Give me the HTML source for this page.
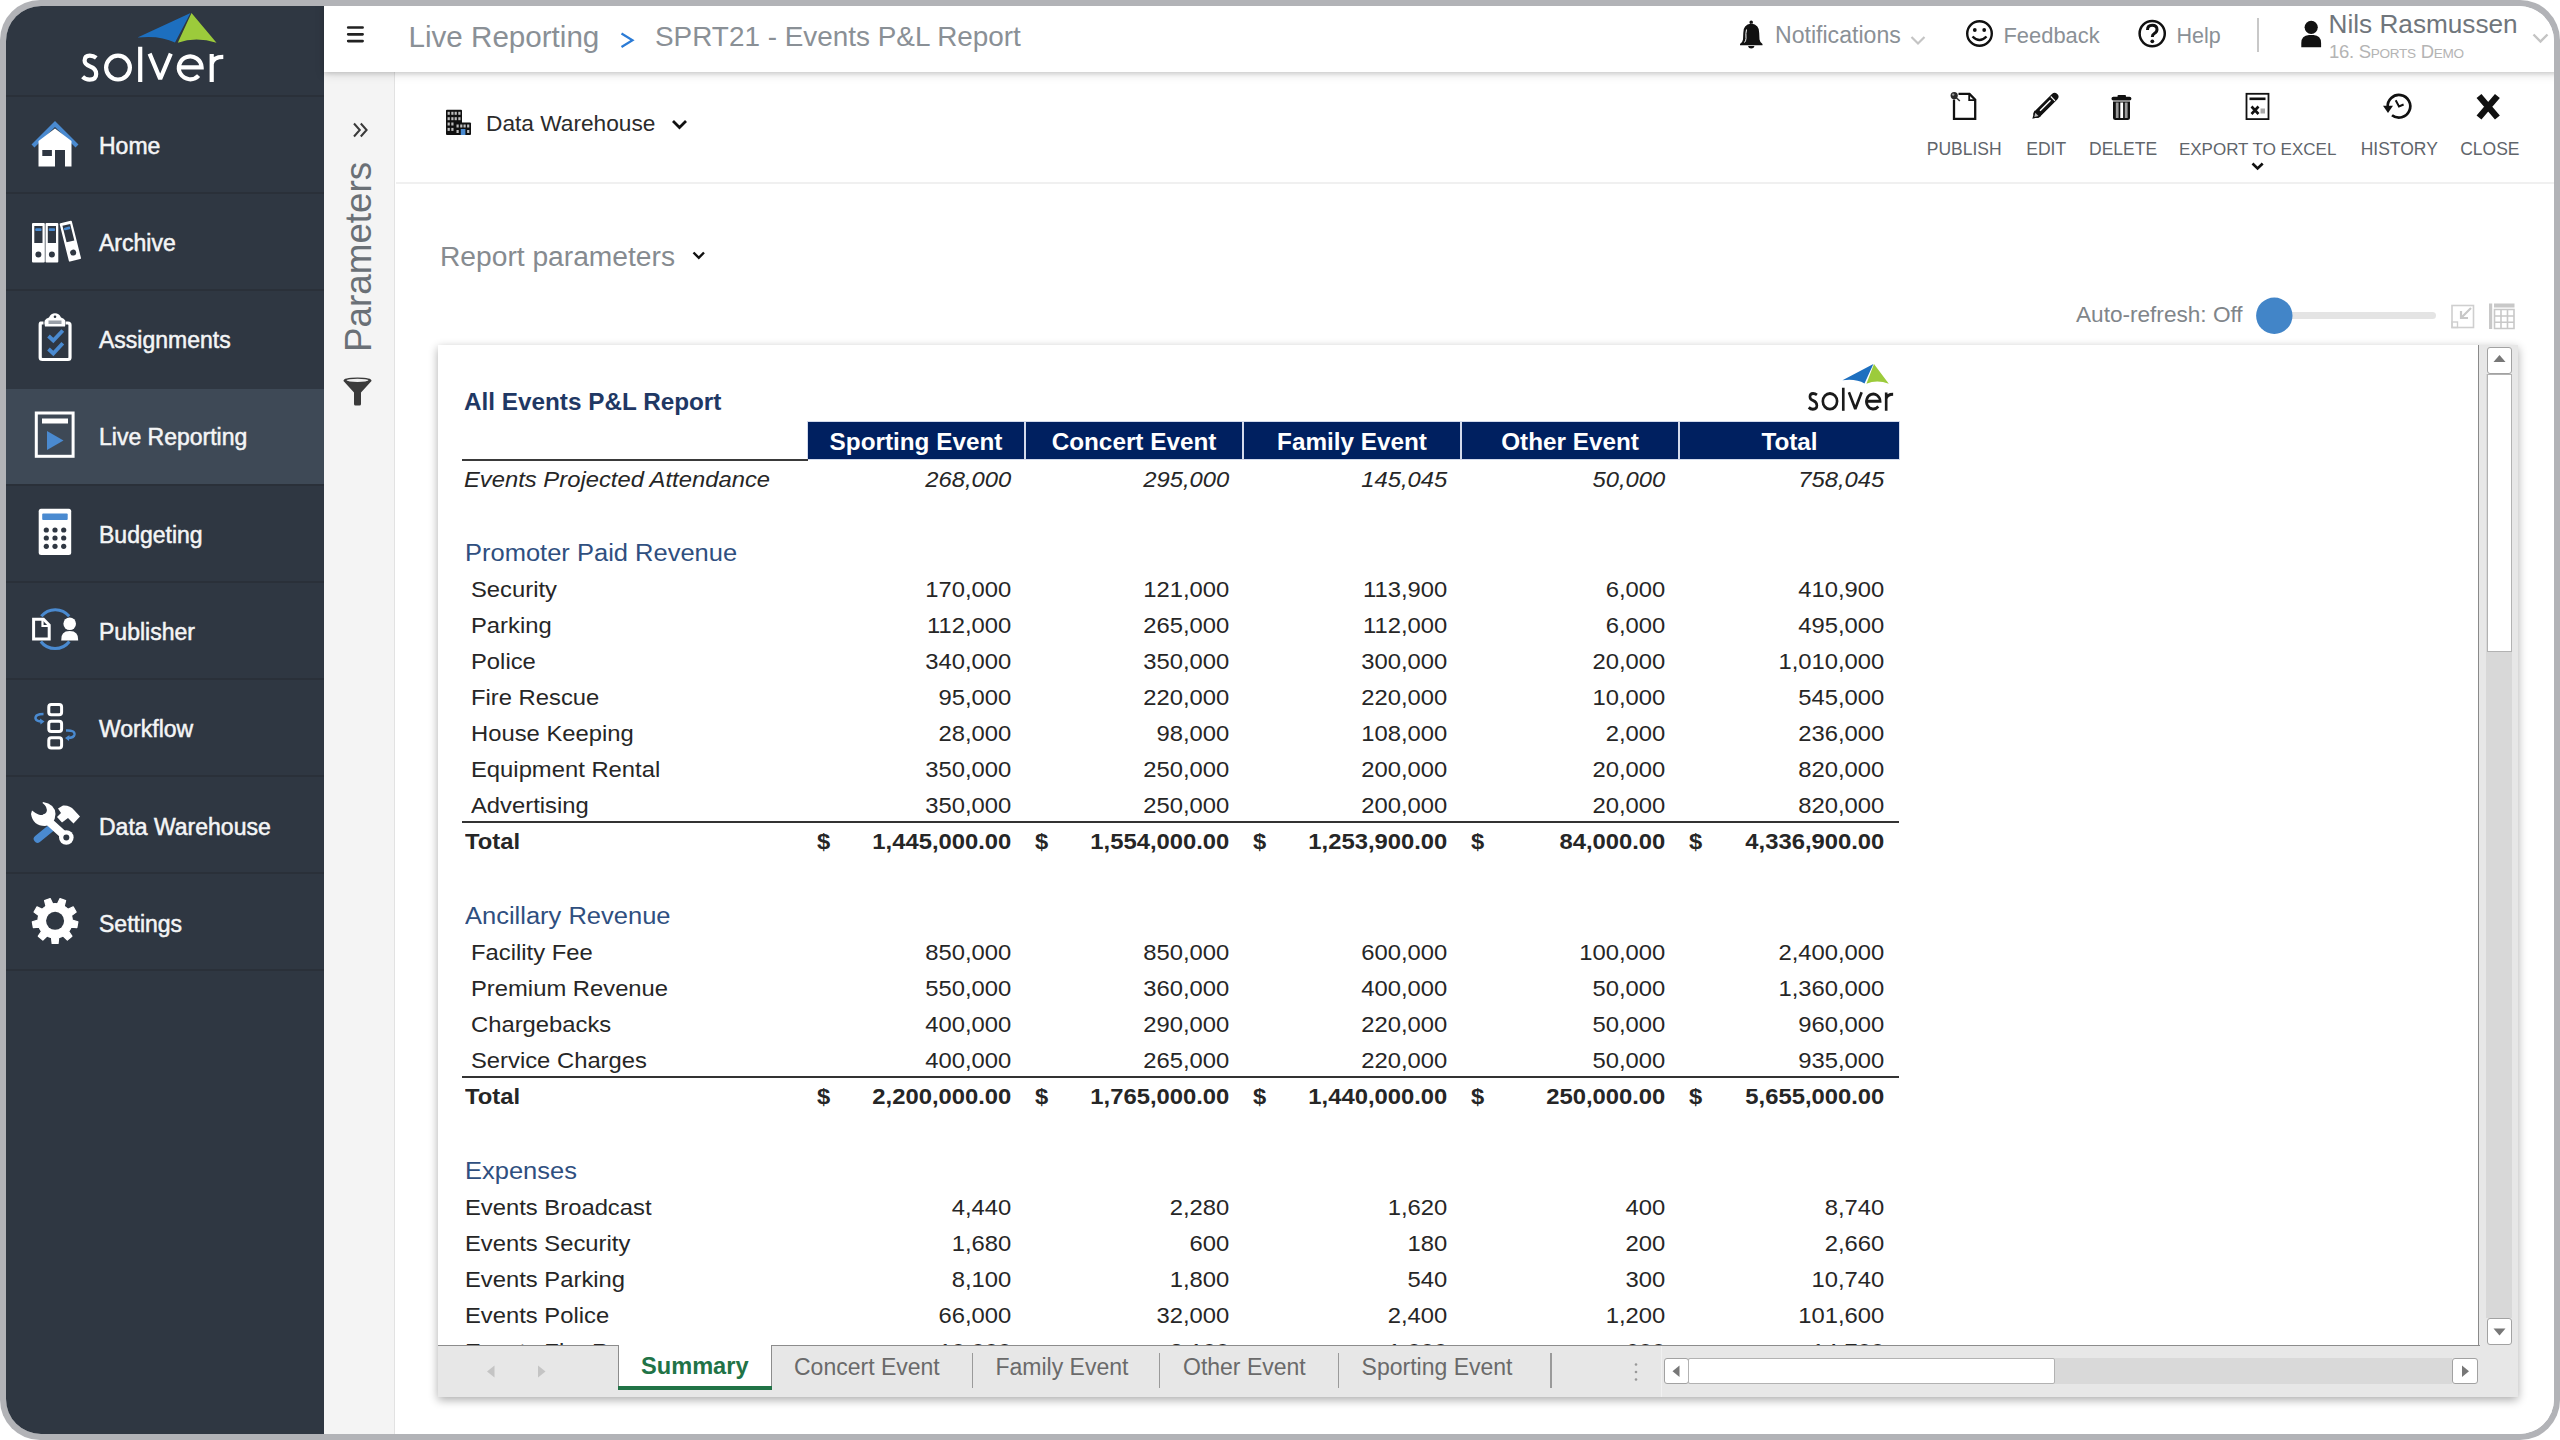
<!DOCTYPE html>
<html><head><meta charset="utf-8">
<style>
html,body{margin:0;padding:0;background:#fff;}
#root{position:absolute;left:0;top:0;width:2560px;height:1440px;overflow:hidden;font-family:"Liberation Sans",sans-serif;}
.t{position:absolute;white-space:nowrap;z-index:3;}
#frame{position:absolute;left:0;top:0;width:2560px;height:1440px;border-radius:40px;background:#b2b3b7;}
#inner{position:absolute;left:6px;top:6px;width:2548px;height:1428px;border-radius:35px;overflow:hidden;background:#fff;}
#content{position:absolute;left:-6px;top:-6px;width:2560px;height:1440px;}
#ov{position:absolute;left:0;top:0;width:2560px;height:1440px;z-index:5;}
</style></head><body><div id="root"><div id="frame"></div><div id="inner"><div id="content">
<div style="position:absolute;left:0px;top:0px;width:324px;height:1440px;background:#2f3742;"></div>
<div style="position:absolute;left:0px;top:388.5px;width:324px;height:96px;background:#3e4956;"></div>
<div style="position:absolute;left:0px;top:95px;width:324px;height:2px;background:#2a3039;"></div>
<div style="position:absolute;left:0px;top:192px;width:324px;height:2px;background:#2a3039;"></div>
<div style="position:absolute;left:0px;top:289px;width:324px;height:2px;background:#2a3039;"></div>
<div style="position:absolute;left:0px;top:484px;width:324px;height:2px;background:#2a3039;"></div>
<div style="position:absolute;left:0px;top:581px;width:324px;height:2px;background:#2a3039;"></div>
<div style="position:absolute;left:0px;top:678px;width:324px;height:2px;background:#2a3039;"></div>
<div style="position:absolute;left:0px;top:775px;width:324px;height:2px;background:#2a3039;"></div>
<div style="position:absolute;left:0px;top:872px;width:324px;height:2px;background:#2a3039;"></div>
<div style="position:absolute;left:0px;top:969px;width:324px;height:2px;background:#2a3039;"></div>
<div class="t" style="left:99.00px;top:134.53px;font-size:23px;line-height:23px;color:#f4f5f6;font-weight:normal;font-style:normal;-webkit-text-stroke:0.5px #f4f5f6;">Home</div>
<div class="t" style="left:99.00px;top:231.83px;font-size:23px;line-height:23px;color:#f4f5f6;font-weight:normal;font-style:normal;-webkit-text-stroke:0.5px #f4f5f6;">Archive</div>
<div class="t" style="left:99.00px;top:329.13px;font-size:23px;line-height:23px;color:#f4f5f6;font-weight:normal;font-style:normal;-webkit-text-stroke:0.5px #f4f5f6;">Assignments</div>
<div class="t" style="left:99.00px;top:426.43px;font-size:23px;line-height:23px;color:#f4f5f6;font-weight:normal;font-style:normal;-webkit-text-stroke:0.5px #f4f5f6;">Live Reporting</div>
<div class="t" style="left:99.00px;top:523.73px;font-size:23px;line-height:23px;color:#f4f5f6;font-weight:normal;font-style:normal;-webkit-text-stroke:0.5px #f4f5f6;">Budgeting</div>
<div class="t" style="left:99.00px;top:621.03px;font-size:23px;line-height:23px;color:#f4f5f6;font-weight:normal;font-style:normal;-webkit-text-stroke:0.5px #f4f5f6;">Publisher</div>
<div class="t" style="left:99.00px;top:718.33px;font-size:23px;line-height:23px;color:#f4f5f6;font-weight:normal;font-style:normal;-webkit-text-stroke:0.5px #f4f5f6;">Workflow</div>
<div class="t" style="left:99.00px;top:815.63px;font-size:23px;line-height:23px;color:#f4f5f6;font-weight:normal;font-style:normal;-webkit-text-stroke:0.5px #f4f5f6;">Data Warehouse</div>
<div class="t" style="left:99.00px;top:912.93px;font-size:23px;line-height:23px;color:#f4f5f6;font-weight:normal;font-style:normal;-webkit-text-stroke:0.5px #f4f5f6;">Settings</div>
<div style="position:absolute;left:324px;top:0px;width:2236px;height:72px;background:#fff;box-shadow:0 2px 4px rgba(0,0,0,0.13), 0 3px 10px rgba(0,0,0,0.10);z-index:1"></div>
<div style="position:absolute;left:324px;top:72px;width:70px;height:1368px;background:#f4f4f4;border-right:1px solid #e2e2e2;box-shadow:1px 0 3px rgba(0,0,0,0.05)"></div>
<div style="position:absolute;left:395px;top:72px;width:2165px;height:1368px;background:#fff;"></div>
<div style="position:absolute;left:396px;top:182px;width:2164px;height:2px;background:#f0f0f0;"></div>
<div class="t" style="left:408.50px;top:21.54px;font-size:29.6px;line-height:29.6px;color:#8a9096;font-weight:normal;font-style:normal;">Live Reporting</div>
<div class="t" style="left:655.00px;top:22.98px;font-size:27.9px;line-height:27.9px;color:#8a9096;font-weight:normal;font-style:normal;">SPRT21 - Events P&amp;L Report</div>
<div class="t" style="left:1775.00px;top:24.45px;font-size:23.1px;line-height:23.1px;color:#8a9096;font-weight:normal;font-style:normal;">Notifications</div>
<div class="t" style="left:2003.50px;top:25.46px;font-size:21.9px;line-height:21.9px;color:#8a9096;font-weight:normal;font-style:normal;">Feedback</div>
<div class="t" style="left:2176.50px;top:25.80px;font-size:21.5px;line-height:21.5px;color:#8a9096;font-weight:normal;font-style:normal;">Help</div>
<div style="position:absolute;left:2257px;top:18px;width:2px;height:34px;background:#c8c8c8;z-index:3;"></div>
<div class="t" style="left:2328.50px;top:11.32px;font-size:26.2px;line-height:26.2px;color:#70767c;font-weight:normal;font-style:normal;">Nils Rasmussen</div>
<div class="t" style="left:2329.00px;top:42.74px;font-size:18.5px;line-height:18.5px;color:#b4b4b4;font-weight:normal;font-style:normal;letter-spacing:-0.3px;">16. S<span style="font-size:13.6px">PORTS</span> D<span style="font-size:13.6px">EMO</span></div>
<div class="t" style="left:371px;top:163px;transform-origin:0 0;transform:rotate(90deg) translate(0,0);"></div><div class="t" style="left:344px;top:352px;height:30px;transform-origin:0 0;transform:rotate(-90deg);font-size:36.8px;line-height:30px;color:#6a7076;">Parameters</div><div class="t" style="left:486.00px;top:111.78px;font-size:22.7px;line-height:22.7px;color:#2b2b2b;font-weight:normal;font-style:normal;">Data Warehouse</div>
<div class="t" style="left:1926.80px;top:140.69px;font-size:17.5px;line-height:17.5px;color:#5f656b;font-weight:normal;font-style:normal;">PUBLISH</div>
<div class="t" style="left:2026.30px;top:140.69px;font-size:17.5px;line-height:17.5px;color:#5f656b;font-weight:normal;font-style:normal;">EDIT</div>
<div class="t" style="left:2089.00px;top:140.69px;font-size:17.5px;line-height:17.5px;color:#5f656b;font-weight:normal;font-style:normal;">DELETE</div>
<div class="t" style="left:2178.90px;top:141.11px;font-size:17.0px;line-height:17.0px;color:#5f656b;font-weight:normal;font-style:normal;">EXPORT TO EXCEL</div>
<div class="t" style="left:2360.70px;top:140.69px;font-size:17.5px;line-height:17.5px;color:#5f656b;font-weight:normal;font-style:normal;">HISTORY</div>
<div class="t" style="left:2460.20px;top:140.69px;font-size:17.5px;line-height:17.5px;color:#5f656b;font-weight:normal;font-style:normal;">CLOSE</div>
<div class="t" style="left:440.00px;top:241.63px;font-size:28.2px;line-height:28.2px;color:#868b90;font-weight:normal;font-style:normal;">Report parameters</div>
<div class="t" style="left:2076.00px;top:303.67px;font-size:22.6px;line-height:22.6px;color:#80858a;font-weight:normal;font-style:normal;">Auto-refresh: Off</div>
<div style="position:absolute;left:2274px;top:311.6px;width:162px;height:7.6px;background:#e4e4e4;border-radius:4px;"></div>
<div style="position:absolute;left:438px;top:345px;width:2080px;height:1052px;background:#e7e7e7;box-shadow:0 3px 9px rgba(0,0,0,0.33);z-index:2;"></div>
<div style="position:absolute;left:438px;top:345px;width:2041px;height:1000px;overflow:hidden;z-index:2;border-right:1px solid #8a8a8a;box-sizing:border-box;"><div style="position:absolute;left:0px;top:0px;width:2041px;height:1000px;background:#fff;"></div>
<div class="t" style="left:26.00px;top:45.43px;font-size:24.3px;line-height:24.3px;color:#1f3864;font-weight:bold;font-style:normal;">All Events P&amp;L Report</div>
<div style="position:absolute;left:369px;top:76px;width:1093px;height:39px;background:#d3daec;"></div>
<div style="position:absolute;left:370px;top:77px;width:216px;height:37px;background:#002060;"></div>
<div class="t" style="left:370px;width:216px;text-align:center;top:85.43px;font-size:24.3px;line-height:24.3px;color:#fff;font-weight:bold;">Sporting Event</div>
<div style="position:absolute;left:588px;top:77px;width:216px;height:37px;background:#002060;"></div>
<div class="t" style="left:588px;width:216px;text-align:center;top:85.43px;font-size:24.3px;line-height:24.3px;color:#fff;font-weight:bold;">Concert Event</div>
<div style="position:absolute;left:806px;top:77px;width:216px;height:37px;background:#002060;"></div>
<div class="t" style="left:806px;width:216px;text-align:center;top:85.43px;font-size:24.3px;line-height:24.3px;color:#fff;font-weight:bold;">Family Event</div>
<div style="position:absolute;left:1024px;top:77px;width:216px;height:37px;background:#002060;"></div>
<div class="t" style="left:1024px;width:216px;text-align:center;top:85.43px;font-size:24.3px;line-height:24.3px;color:#fff;font-weight:bold;">Other Event</div>
<div style="position:absolute;left:1242px;top:77px;width:219px;height:37px;background:#002060;"></div>
<div class="t" style="left:1242px;width:219px;text-align:center;top:85.43px;font-size:24.3px;line-height:24.3px;color:#fff;font-weight:bold;">Total</div>
<div style="position:absolute;left:24px;top:114px;width:346px;height:2px;background:#3a3a3a;"></div>
<div class="t" style="left:26.00px;top:121.85px;font-size:23.8px;line-height:23.8px;color:#262626;font-weight:normal;font-style:italic;transform:scaleY(0.94);transform-origin:0 84.65%;">Events Projected Attendance</div>
<div class="t" style="right:1466.70px;top:121.85px;font-size:23.8px;line-height:23.8px;color:#262626;font-weight:normal;font-style:italic;transform:scaleY(0.94);transform-origin:0 84.65%;">268,000</div>
<div class="t" style="right:1248.70px;top:121.85px;font-size:23.8px;line-height:23.8px;color:#262626;font-weight:normal;font-style:italic;transform:scaleY(0.94);transform-origin:0 84.65%;">295,000</div>
<div class="t" style="right:1030.70px;top:121.85px;font-size:23.8px;line-height:23.8px;color:#262626;font-weight:normal;font-style:italic;transform:scaleY(0.94);transform-origin:0 84.65%;">145,045</div>
<div class="t" style="right:812.70px;top:121.85px;font-size:23.8px;line-height:23.8px;color:#262626;font-weight:normal;font-style:italic;transform:scaleY(0.94);transform-origin:0 84.65%;">50,000</div>
<div class="t" style="right:593.70px;top:121.85px;font-size:23.8px;line-height:23.8px;color:#262626;font-weight:normal;font-style:italic;transform:scaleY(0.94);transform-origin:0 84.65%;">758,045</div>
<div class="t" style="left:27.00px;top:194.71px;font-size:25.5px;line-height:25.5px;color:#2f4f80;font-weight:normal;font-style:normal;transform:scaleY(0.94);transform-origin:0 84.65%;">Promoter Paid Revenue</div>
<div class="t" style="left:33.00px;top:232.15px;font-size:23.8px;line-height:23.8px;color:#262626;font-weight:normal;font-style:normal;transform:scaleY(0.94);transform-origin:0 84.65%;">Security</div>
<div class="t" style="right:1466.70px;top:232.15px;font-size:23.8px;line-height:23.8px;color:#262626;font-weight:normal;font-style:normal;transform:scaleY(0.94);transform-origin:0 84.65%;">170,000</div>
<div class="t" style="right:1248.70px;top:232.15px;font-size:23.8px;line-height:23.8px;color:#262626;font-weight:normal;font-style:normal;transform:scaleY(0.94);transform-origin:0 84.65%;">121,000</div>
<div class="t" style="right:1030.70px;top:232.15px;font-size:23.8px;line-height:23.8px;color:#262626;font-weight:normal;font-style:normal;transform:scaleY(0.94);transform-origin:0 84.65%;">113,900</div>
<div class="t" style="right:812.70px;top:232.15px;font-size:23.8px;line-height:23.8px;color:#262626;font-weight:normal;font-style:normal;transform:scaleY(0.94);transform-origin:0 84.65%;">6,000</div>
<div class="t" style="right:593.70px;top:232.15px;font-size:23.8px;line-height:23.8px;color:#262626;font-weight:normal;font-style:normal;transform:scaleY(0.94);transform-origin:0 84.65%;">410,900</div>
<div class="t" style="left:33.00px;top:268.15px;font-size:23.8px;line-height:23.8px;color:#262626;font-weight:normal;font-style:normal;transform:scaleY(0.94);transform-origin:0 84.65%;">Parking</div>
<div class="t" style="right:1466.70px;top:268.15px;font-size:23.8px;line-height:23.8px;color:#262626;font-weight:normal;font-style:normal;transform:scaleY(0.94);transform-origin:0 84.65%;">112,000</div>
<div class="t" style="right:1248.70px;top:268.15px;font-size:23.8px;line-height:23.8px;color:#262626;font-weight:normal;font-style:normal;transform:scaleY(0.94);transform-origin:0 84.65%;">265,000</div>
<div class="t" style="right:1030.70px;top:268.15px;font-size:23.8px;line-height:23.8px;color:#262626;font-weight:normal;font-style:normal;transform:scaleY(0.94);transform-origin:0 84.65%;">112,000</div>
<div class="t" style="right:812.70px;top:268.15px;font-size:23.8px;line-height:23.8px;color:#262626;font-weight:normal;font-style:normal;transform:scaleY(0.94);transform-origin:0 84.65%;">6,000</div>
<div class="t" style="right:593.70px;top:268.15px;font-size:23.8px;line-height:23.8px;color:#262626;font-weight:normal;font-style:normal;transform:scaleY(0.94);transform-origin:0 84.65%;">495,000</div>
<div class="t" style="left:33.00px;top:304.15px;font-size:23.8px;line-height:23.8px;color:#262626;font-weight:normal;font-style:normal;transform:scaleY(0.94);transform-origin:0 84.65%;">Police</div>
<div class="t" style="right:1466.70px;top:304.15px;font-size:23.8px;line-height:23.8px;color:#262626;font-weight:normal;font-style:normal;transform:scaleY(0.94);transform-origin:0 84.65%;">340,000</div>
<div class="t" style="right:1248.70px;top:304.15px;font-size:23.8px;line-height:23.8px;color:#262626;font-weight:normal;font-style:normal;transform:scaleY(0.94);transform-origin:0 84.65%;">350,000</div>
<div class="t" style="right:1030.70px;top:304.15px;font-size:23.8px;line-height:23.8px;color:#262626;font-weight:normal;font-style:normal;transform:scaleY(0.94);transform-origin:0 84.65%;">300,000</div>
<div class="t" style="right:812.70px;top:304.15px;font-size:23.8px;line-height:23.8px;color:#262626;font-weight:normal;font-style:normal;transform:scaleY(0.94);transform-origin:0 84.65%;">20,000</div>
<div class="t" style="right:593.70px;top:304.15px;font-size:23.8px;line-height:23.8px;color:#262626;font-weight:normal;font-style:normal;transform:scaleY(0.94);transform-origin:0 84.65%;">1,010,000</div>
<div class="t" style="left:33.00px;top:340.15px;font-size:23.8px;line-height:23.8px;color:#262626;font-weight:normal;font-style:normal;transform:scaleY(0.94);transform-origin:0 84.65%;">Fire Rescue</div>
<div class="t" style="right:1466.70px;top:340.15px;font-size:23.8px;line-height:23.8px;color:#262626;font-weight:normal;font-style:normal;transform:scaleY(0.94);transform-origin:0 84.65%;">95,000</div>
<div class="t" style="right:1248.70px;top:340.15px;font-size:23.8px;line-height:23.8px;color:#262626;font-weight:normal;font-style:normal;transform:scaleY(0.94);transform-origin:0 84.65%;">220,000</div>
<div class="t" style="right:1030.70px;top:340.15px;font-size:23.8px;line-height:23.8px;color:#262626;font-weight:normal;font-style:normal;transform:scaleY(0.94);transform-origin:0 84.65%;">220,000</div>
<div class="t" style="right:812.70px;top:340.15px;font-size:23.8px;line-height:23.8px;color:#262626;font-weight:normal;font-style:normal;transform:scaleY(0.94);transform-origin:0 84.65%;">10,000</div>
<div class="t" style="right:593.70px;top:340.15px;font-size:23.8px;line-height:23.8px;color:#262626;font-weight:normal;font-style:normal;transform:scaleY(0.94);transform-origin:0 84.65%;">545,000</div>
<div class="t" style="left:33.00px;top:376.15px;font-size:23.8px;line-height:23.8px;color:#262626;font-weight:normal;font-style:normal;transform:scaleY(0.94);transform-origin:0 84.65%;">House Keeping</div>
<div class="t" style="right:1466.70px;top:376.15px;font-size:23.8px;line-height:23.8px;color:#262626;font-weight:normal;font-style:normal;transform:scaleY(0.94);transform-origin:0 84.65%;">28,000</div>
<div class="t" style="right:1248.70px;top:376.15px;font-size:23.8px;line-height:23.8px;color:#262626;font-weight:normal;font-style:normal;transform:scaleY(0.94);transform-origin:0 84.65%;">98,000</div>
<div class="t" style="right:1030.70px;top:376.15px;font-size:23.8px;line-height:23.8px;color:#262626;font-weight:normal;font-style:normal;transform:scaleY(0.94);transform-origin:0 84.65%;">108,000</div>
<div class="t" style="right:812.70px;top:376.15px;font-size:23.8px;line-height:23.8px;color:#262626;font-weight:normal;font-style:normal;transform:scaleY(0.94);transform-origin:0 84.65%;">2,000</div>
<div class="t" style="right:593.70px;top:376.15px;font-size:23.8px;line-height:23.8px;color:#262626;font-weight:normal;font-style:normal;transform:scaleY(0.94);transform-origin:0 84.65%;">236,000</div>
<div class="t" style="left:33.00px;top:412.15px;font-size:23.8px;line-height:23.8px;color:#262626;font-weight:normal;font-style:normal;transform:scaleY(0.94);transform-origin:0 84.65%;">Equipment Rental</div>
<div class="t" style="right:1466.70px;top:412.15px;font-size:23.8px;line-height:23.8px;color:#262626;font-weight:normal;font-style:normal;transform:scaleY(0.94);transform-origin:0 84.65%;">350,000</div>
<div class="t" style="right:1248.70px;top:412.15px;font-size:23.8px;line-height:23.8px;color:#262626;font-weight:normal;font-style:normal;transform:scaleY(0.94);transform-origin:0 84.65%;">250,000</div>
<div class="t" style="right:1030.70px;top:412.15px;font-size:23.8px;line-height:23.8px;color:#262626;font-weight:normal;font-style:normal;transform:scaleY(0.94);transform-origin:0 84.65%;">200,000</div>
<div class="t" style="right:812.70px;top:412.15px;font-size:23.8px;line-height:23.8px;color:#262626;font-weight:normal;font-style:normal;transform:scaleY(0.94);transform-origin:0 84.65%;">20,000</div>
<div class="t" style="right:593.70px;top:412.15px;font-size:23.8px;line-height:23.8px;color:#262626;font-weight:normal;font-style:normal;transform:scaleY(0.94);transform-origin:0 84.65%;">820,000</div>
<div class="t" style="left:33.00px;top:448.15px;font-size:23.8px;line-height:23.8px;color:#262626;font-weight:normal;font-style:normal;transform:scaleY(0.94);transform-origin:0 84.65%;">Advertising</div>
<div class="t" style="right:1466.70px;top:448.15px;font-size:23.8px;line-height:23.8px;color:#262626;font-weight:normal;font-style:normal;transform:scaleY(0.94);transform-origin:0 84.65%;">350,000</div>
<div class="t" style="right:1248.70px;top:448.15px;font-size:23.8px;line-height:23.8px;color:#262626;font-weight:normal;font-style:normal;transform:scaleY(0.94);transform-origin:0 84.65%;">250,000</div>
<div class="t" style="right:1030.70px;top:448.15px;font-size:23.8px;line-height:23.8px;color:#262626;font-weight:normal;font-style:normal;transform:scaleY(0.94);transform-origin:0 84.65%;">200,000</div>
<div class="t" style="right:812.70px;top:448.15px;font-size:23.8px;line-height:23.8px;color:#262626;font-weight:normal;font-style:normal;transform:scaleY(0.94);transform-origin:0 84.65%;">20,000</div>
<div class="t" style="right:593.70px;top:448.15px;font-size:23.8px;line-height:23.8px;color:#262626;font-weight:normal;font-style:normal;transform:scaleY(0.94);transform-origin:0 84.65%;">820,000</div>
<div style="position:absolute;left:24px;top:476px;width:1437px;height:2px;background:#333;"></div>
<div class="t" style="left:27.00px;top:483.85px;font-size:23.8px;line-height:23.8px;color:#262626;font-weight:bold;font-style:normal;transform:scaleY(0.94);transform-origin:0 84.65%;">Total</div>
<div class="t" style="right:1466.70px;top:483.85px;font-size:23.8px;line-height:23.8px;color:#262626;font-weight:bold;font-style:normal;transform:scaleY(0.94);transform-origin:0 84.65%;">1,445,000.00</div>
<div class="t" style="left:379.00px;top:483.85px;font-size:23.8px;line-height:23.8px;color:#262626;font-weight:bold;font-style:normal;transform:scaleY(0.94);transform-origin:0 84.65%;">$</div>
<div class="t" style="right:1248.70px;top:483.85px;font-size:23.8px;line-height:23.8px;color:#262626;font-weight:bold;font-style:normal;transform:scaleY(0.94);transform-origin:0 84.65%;">1,554,000.00</div>
<div class="t" style="left:597.00px;top:483.85px;font-size:23.8px;line-height:23.8px;color:#262626;font-weight:bold;font-style:normal;transform:scaleY(0.94);transform-origin:0 84.65%;">$</div>
<div class="t" style="right:1030.70px;top:483.85px;font-size:23.8px;line-height:23.8px;color:#262626;font-weight:bold;font-style:normal;transform:scaleY(0.94);transform-origin:0 84.65%;">1,253,900.00</div>
<div class="t" style="left:815.00px;top:483.85px;font-size:23.8px;line-height:23.8px;color:#262626;font-weight:bold;font-style:normal;transform:scaleY(0.94);transform-origin:0 84.65%;">$</div>
<div class="t" style="right:812.70px;top:483.85px;font-size:23.8px;line-height:23.8px;color:#262626;font-weight:bold;font-style:normal;transform:scaleY(0.94);transform-origin:0 84.65%;">84,000.00</div>
<div class="t" style="left:1033.00px;top:483.85px;font-size:23.8px;line-height:23.8px;color:#262626;font-weight:bold;font-style:normal;transform:scaleY(0.94);transform-origin:0 84.65%;">$</div>
<div class="t" style="right:593.70px;top:483.85px;font-size:23.8px;line-height:23.8px;color:#262626;font-weight:bold;font-style:normal;transform:scaleY(0.94);transform-origin:0 84.65%;">4,336,900.00</div>
<div class="t" style="left:1251.00px;top:483.85px;font-size:23.8px;line-height:23.8px;color:#262626;font-weight:bold;font-style:normal;transform:scaleY(0.94);transform-origin:0 84.65%;">$</div>
<div class="t" style="left:27.00px;top:557.81px;font-size:25.5px;line-height:25.5px;color:#2f4f80;font-weight:normal;font-style:normal;transform:scaleY(0.94);transform-origin:0 84.65%;">Ancillary Revenue</div>
<div class="t" style="left:33.00px;top:595.15px;font-size:23.8px;line-height:23.8px;color:#262626;font-weight:normal;font-style:normal;transform:scaleY(0.94);transform-origin:0 84.65%;">Facility Fee</div>
<div class="t" style="right:1466.70px;top:595.15px;font-size:23.8px;line-height:23.8px;color:#262626;font-weight:normal;font-style:normal;transform:scaleY(0.94);transform-origin:0 84.65%;">850,000</div>
<div class="t" style="right:1248.70px;top:595.15px;font-size:23.8px;line-height:23.8px;color:#262626;font-weight:normal;font-style:normal;transform:scaleY(0.94);transform-origin:0 84.65%;">850,000</div>
<div class="t" style="right:1030.70px;top:595.15px;font-size:23.8px;line-height:23.8px;color:#262626;font-weight:normal;font-style:normal;transform:scaleY(0.94);transform-origin:0 84.65%;">600,000</div>
<div class="t" style="right:812.70px;top:595.15px;font-size:23.8px;line-height:23.8px;color:#262626;font-weight:normal;font-style:normal;transform:scaleY(0.94);transform-origin:0 84.65%;">100,000</div>
<div class="t" style="right:593.70px;top:595.15px;font-size:23.8px;line-height:23.8px;color:#262626;font-weight:normal;font-style:normal;transform:scaleY(0.94);transform-origin:0 84.65%;">2,400,000</div>
<div class="t" style="left:33.00px;top:631.15px;font-size:23.8px;line-height:23.8px;color:#262626;font-weight:normal;font-style:normal;transform:scaleY(0.94);transform-origin:0 84.65%;">Premium Revenue</div>
<div class="t" style="right:1466.70px;top:631.15px;font-size:23.8px;line-height:23.8px;color:#262626;font-weight:normal;font-style:normal;transform:scaleY(0.94);transform-origin:0 84.65%;">550,000</div>
<div class="t" style="right:1248.70px;top:631.15px;font-size:23.8px;line-height:23.8px;color:#262626;font-weight:normal;font-style:normal;transform:scaleY(0.94);transform-origin:0 84.65%;">360,000</div>
<div class="t" style="right:1030.70px;top:631.15px;font-size:23.8px;line-height:23.8px;color:#262626;font-weight:normal;font-style:normal;transform:scaleY(0.94);transform-origin:0 84.65%;">400,000</div>
<div class="t" style="right:812.70px;top:631.15px;font-size:23.8px;line-height:23.8px;color:#262626;font-weight:normal;font-style:normal;transform:scaleY(0.94);transform-origin:0 84.65%;">50,000</div>
<div class="t" style="right:593.70px;top:631.15px;font-size:23.8px;line-height:23.8px;color:#262626;font-weight:normal;font-style:normal;transform:scaleY(0.94);transform-origin:0 84.65%;">1,360,000</div>
<div class="t" style="left:33.00px;top:667.15px;font-size:23.8px;line-height:23.8px;color:#262626;font-weight:normal;font-style:normal;transform:scaleY(0.94);transform-origin:0 84.65%;">Chargebacks</div>
<div class="t" style="right:1466.70px;top:667.15px;font-size:23.8px;line-height:23.8px;color:#262626;font-weight:normal;font-style:normal;transform:scaleY(0.94);transform-origin:0 84.65%;">400,000</div>
<div class="t" style="right:1248.70px;top:667.15px;font-size:23.8px;line-height:23.8px;color:#262626;font-weight:normal;font-style:normal;transform:scaleY(0.94);transform-origin:0 84.65%;">290,000</div>
<div class="t" style="right:1030.70px;top:667.15px;font-size:23.8px;line-height:23.8px;color:#262626;font-weight:normal;font-style:normal;transform:scaleY(0.94);transform-origin:0 84.65%;">220,000</div>
<div class="t" style="right:812.70px;top:667.15px;font-size:23.8px;line-height:23.8px;color:#262626;font-weight:normal;font-style:normal;transform:scaleY(0.94);transform-origin:0 84.65%;">50,000</div>
<div class="t" style="right:593.70px;top:667.15px;font-size:23.8px;line-height:23.8px;color:#262626;font-weight:normal;font-style:normal;transform:scaleY(0.94);transform-origin:0 84.65%;">960,000</div>
<div class="t" style="left:33.00px;top:703.15px;font-size:23.8px;line-height:23.8px;color:#262626;font-weight:normal;font-style:normal;transform:scaleY(0.94);transform-origin:0 84.65%;">Service Charges</div>
<div class="t" style="right:1466.70px;top:703.15px;font-size:23.8px;line-height:23.8px;color:#262626;font-weight:normal;font-style:normal;transform:scaleY(0.94);transform-origin:0 84.65%;">400,000</div>
<div class="t" style="right:1248.70px;top:703.15px;font-size:23.8px;line-height:23.8px;color:#262626;font-weight:normal;font-style:normal;transform:scaleY(0.94);transform-origin:0 84.65%;">265,000</div>
<div class="t" style="right:1030.70px;top:703.15px;font-size:23.8px;line-height:23.8px;color:#262626;font-weight:normal;font-style:normal;transform:scaleY(0.94);transform-origin:0 84.65%;">220,000</div>
<div class="t" style="right:812.70px;top:703.15px;font-size:23.8px;line-height:23.8px;color:#262626;font-weight:normal;font-style:normal;transform:scaleY(0.94);transform-origin:0 84.65%;">50,000</div>
<div class="t" style="right:593.70px;top:703.15px;font-size:23.8px;line-height:23.8px;color:#262626;font-weight:normal;font-style:normal;transform:scaleY(0.94);transform-origin:0 84.65%;">935,000</div>
<div style="position:absolute;left:24px;top:731px;width:1437px;height:2px;background:#333;"></div>
<div class="t" style="left:27.00px;top:738.85px;font-size:23.8px;line-height:23.8px;color:#262626;font-weight:bold;font-style:normal;transform:scaleY(0.94);transform-origin:0 84.65%;">Total</div>
<div class="t" style="right:1466.70px;top:738.85px;font-size:23.8px;line-height:23.8px;color:#262626;font-weight:bold;font-style:normal;transform:scaleY(0.94);transform-origin:0 84.65%;">2,200,000.00</div>
<div class="t" style="left:379.00px;top:738.85px;font-size:23.8px;line-height:23.8px;color:#262626;font-weight:bold;font-style:normal;transform:scaleY(0.94);transform-origin:0 84.65%;">$</div>
<div class="t" style="right:1248.70px;top:738.85px;font-size:23.8px;line-height:23.8px;color:#262626;font-weight:bold;font-style:normal;transform:scaleY(0.94);transform-origin:0 84.65%;">1,765,000.00</div>
<div class="t" style="left:597.00px;top:738.85px;font-size:23.8px;line-height:23.8px;color:#262626;font-weight:bold;font-style:normal;transform:scaleY(0.94);transform-origin:0 84.65%;">$</div>
<div class="t" style="right:1030.70px;top:738.85px;font-size:23.8px;line-height:23.8px;color:#262626;font-weight:bold;font-style:normal;transform:scaleY(0.94);transform-origin:0 84.65%;">1,440,000.00</div>
<div class="t" style="left:815.00px;top:738.85px;font-size:23.8px;line-height:23.8px;color:#262626;font-weight:bold;font-style:normal;transform:scaleY(0.94);transform-origin:0 84.65%;">$</div>
<div class="t" style="right:812.70px;top:738.85px;font-size:23.8px;line-height:23.8px;color:#262626;font-weight:bold;font-style:normal;transform:scaleY(0.94);transform-origin:0 84.65%;">250,000.00</div>
<div class="t" style="left:1033.00px;top:738.85px;font-size:23.8px;line-height:23.8px;color:#262626;font-weight:bold;font-style:normal;transform:scaleY(0.94);transform-origin:0 84.65%;">$</div>
<div class="t" style="right:593.70px;top:738.85px;font-size:23.8px;line-height:23.8px;color:#262626;font-weight:bold;font-style:normal;transform:scaleY(0.94);transform-origin:0 84.65%;">5,655,000.00</div>
<div class="t" style="left:1251.00px;top:738.85px;font-size:23.8px;line-height:23.8px;color:#262626;font-weight:bold;font-style:normal;transform:scaleY(0.94);transform-origin:0 84.65%;">$</div>
<div class="t" style="left:27.00px;top:812.71px;font-size:25.5px;line-height:25.5px;color:#2f4f80;font-weight:normal;font-style:normal;transform:scaleY(0.94);transform-origin:0 84.65%;">Expenses</div>
<div class="t" style="left:27.00px;top:850.35px;font-size:23.8px;line-height:23.8px;color:#262626;font-weight:normal;font-style:normal;transform:scaleY(0.94);transform-origin:0 84.65%;">Events Broadcast</div>
<div class="t" style="right:1466.70px;top:850.35px;font-size:23.8px;line-height:23.8px;color:#262626;font-weight:normal;font-style:normal;transform:scaleY(0.94);transform-origin:0 84.65%;">4,440</div>
<div class="t" style="right:1248.70px;top:850.35px;font-size:23.8px;line-height:23.8px;color:#262626;font-weight:normal;font-style:normal;transform:scaleY(0.94);transform-origin:0 84.65%;">2,280</div>
<div class="t" style="right:1030.70px;top:850.35px;font-size:23.8px;line-height:23.8px;color:#262626;font-weight:normal;font-style:normal;transform:scaleY(0.94);transform-origin:0 84.65%;">1,620</div>
<div class="t" style="right:812.70px;top:850.35px;font-size:23.8px;line-height:23.8px;color:#262626;font-weight:normal;font-style:normal;transform:scaleY(0.94);transform-origin:0 84.65%;">400</div>
<div class="t" style="right:593.70px;top:850.35px;font-size:23.8px;line-height:23.8px;color:#262626;font-weight:normal;font-style:normal;transform:scaleY(0.94);transform-origin:0 84.65%;">8,740</div>
<div class="t" style="left:27.00px;top:886.35px;font-size:23.8px;line-height:23.8px;color:#262626;font-weight:normal;font-style:normal;transform:scaleY(0.94);transform-origin:0 84.65%;">Events Security</div>
<div class="t" style="right:1466.70px;top:886.35px;font-size:23.8px;line-height:23.8px;color:#262626;font-weight:normal;font-style:normal;transform:scaleY(0.94);transform-origin:0 84.65%;">1,680</div>
<div class="t" style="right:1248.70px;top:886.35px;font-size:23.8px;line-height:23.8px;color:#262626;font-weight:normal;font-style:normal;transform:scaleY(0.94);transform-origin:0 84.65%;">600</div>
<div class="t" style="right:1030.70px;top:886.35px;font-size:23.8px;line-height:23.8px;color:#262626;font-weight:normal;font-style:normal;transform:scaleY(0.94);transform-origin:0 84.65%;">180</div>
<div class="t" style="right:812.70px;top:886.35px;font-size:23.8px;line-height:23.8px;color:#262626;font-weight:normal;font-style:normal;transform:scaleY(0.94);transform-origin:0 84.65%;">200</div>
<div class="t" style="right:593.70px;top:886.35px;font-size:23.8px;line-height:23.8px;color:#262626;font-weight:normal;font-style:normal;transform:scaleY(0.94);transform-origin:0 84.65%;">2,660</div>
<div class="t" style="left:27.00px;top:922.35px;font-size:23.8px;line-height:23.8px;color:#262626;font-weight:normal;font-style:normal;transform:scaleY(0.94);transform-origin:0 84.65%;">Events Parking</div>
<div class="t" style="right:1466.70px;top:922.35px;font-size:23.8px;line-height:23.8px;color:#262626;font-weight:normal;font-style:normal;transform:scaleY(0.94);transform-origin:0 84.65%;">8,100</div>
<div class="t" style="right:1248.70px;top:922.35px;font-size:23.8px;line-height:23.8px;color:#262626;font-weight:normal;font-style:normal;transform:scaleY(0.94);transform-origin:0 84.65%;">1,800</div>
<div class="t" style="right:1030.70px;top:922.35px;font-size:23.8px;line-height:23.8px;color:#262626;font-weight:normal;font-style:normal;transform:scaleY(0.94);transform-origin:0 84.65%;">540</div>
<div class="t" style="right:812.70px;top:922.35px;font-size:23.8px;line-height:23.8px;color:#262626;font-weight:normal;font-style:normal;transform:scaleY(0.94);transform-origin:0 84.65%;">300</div>
<div class="t" style="right:593.70px;top:922.35px;font-size:23.8px;line-height:23.8px;color:#262626;font-weight:normal;font-style:normal;transform:scaleY(0.94);transform-origin:0 84.65%;">10,740</div>
<div class="t" style="left:27.00px;top:958.35px;font-size:23.8px;line-height:23.8px;color:#262626;font-weight:normal;font-style:normal;transform:scaleY(0.94);transform-origin:0 84.65%;">Events Police</div>
<div class="t" style="right:1466.70px;top:958.35px;font-size:23.8px;line-height:23.8px;color:#262626;font-weight:normal;font-style:normal;transform:scaleY(0.94);transform-origin:0 84.65%;">66,000</div>
<div class="t" style="right:1248.70px;top:958.35px;font-size:23.8px;line-height:23.8px;color:#262626;font-weight:normal;font-style:normal;transform:scaleY(0.94);transform-origin:0 84.65%;">32,000</div>
<div class="t" style="right:1030.70px;top:958.35px;font-size:23.8px;line-height:23.8px;color:#262626;font-weight:normal;font-style:normal;transform:scaleY(0.94);transform-origin:0 84.65%;">2,400</div>
<div class="t" style="right:812.70px;top:958.35px;font-size:23.8px;line-height:23.8px;color:#262626;font-weight:normal;font-style:normal;transform:scaleY(0.94);transform-origin:0 84.65%;">1,200</div>
<div class="t" style="right:593.70px;top:958.35px;font-size:23.8px;line-height:23.8px;color:#262626;font-weight:normal;font-style:normal;transform:scaleY(0.94);transform-origin:0 84.65%;">101,600</div>
<div class="t" style="left:27.00px;top:994.35px;font-size:23.8px;line-height:23.8px;color:#262626;font-weight:normal;font-style:normal;transform:scaleY(0.94);transform-origin:0 84.65%;">Events Fire Rescue</div>
<div class="t" style="right:1466.70px;top:994.35px;font-size:23.8px;line-height:23.8px;color:#262626;font-weight:normal;font-style:normal;transform:scaleY(0.94);transform-origin:0 84.65%;">10,000</div>
<div class="t" style="right:1248.70px;top:994.35px;font-size:23.8px;line-height:23.8px;color:#262626;font-weight:normal;font-style:normal;transform:scaleY(0.94);transform-origin:0 84.65%;">3,100</div>
<div class="t" style="right:1030.70px;top:994.35px;font-size:23.8px;line-height:23.8px;color:#262626;font-weight:normal;font-style:normal;transform:scaleY(0.94);transform-origin:0 84.65%;">1,000</div>
<div class="t" style="right:812.70px;top:994.35px;font-size:23.8px;line-height:23.8px;color:#262626;font-weight:normal;font-style:normal;transform:scaleY(0.94);transform-origin:0 84.65%;">600</div>
<div class="t" style="right:593.70px;top:994.35px;font-size:23.8px;line-height:23.8px;color:#262626;font-weight:normal;font-style:normal;transform:scaleY(0.94);transform-origin:0 84.65%;">14,700</div>
<svg style="position:absolute;left:0;top:0;z-index:4" width="2041" height="1000" viewBox="438 345 2041 1000"><path d="M1842.5,380.3 L1873.4,364.1 L1864.5,383.6 Q1856,378.5 1842.5,380.3 Z" fill="#1d6fbf"/><path d="M1874,364.1 L1888.8,383.8 Q1877,379 1866.4,383.8 Z" fill="#9ccb3b"/><g transform="translate(1759.1599999999999,357.08050000000003) scale(0.6,0.655)" fill="none" stroke="#1a1a1a" stroke-width="4.4"><path d="M96.3,57.8 Q93.5,55.6 89.8,55.6 Q84.6,55.6 84.6,60.6 Q84.6,64.6 90.2,66.4 Q96.2,68.4 96.2,74 Q96.2,79.6 89.6,79.6 Q85.4,79.6 82.6,76.8"/><circle cx="118" cy="67.6" r="11.9"/><path d="M140.2,46.8 L140.2,82"/><path d="M149.6,53.6 L160.2,79 L170.8,53.6" stroke-linejoin="miter" stroke-miterlimit="2"/><path d="M178.9,67.4 L201.6,67.4 A11.4,11.4 0 1 0 198.6,75.6"/><path d="M211.7,54 L211.7,82 M211.7,64 Q213,56.8 223.3,56.8"/></g></svg></div><div style="position:absolute;left:2486px;top:374px;width:26px;height:944px;background:#d8d8d8;z-index:3;"></div>
<div style="position:absolute;left:2486.5px;top:346.5px;width:25.5px;height:27px;background:#fff;border:1.5px solid #a2a2a2;border-radius:3px;box-sizing:border-box;z-index:3;"></div>
<div style="position:absolute;left:2486.5px;top:374px;width:25.5px;height:277.5px;background:#fff;border:1.5px solid #b2b2b2;box-sizing:border-box;z-index:3;"></div>
<div style="position:absolute;left:2486.5px;top:1318px;width:25.5px;height:26.5px;background:#fff;border:1.5px solid #a2a2a2;border-radius:3px;box-sizing:border-box;z-index:3;"></div>
<div style="position:absolute;left:438px;top:1344.5px;width:2041.5px;height:1.6px;background:#8c8c8c;z-index:3;"></div>
<div style="position:absolute;left:617.5px;top:1344.5px;width:154px;height:45px;background:#fff;border-left:1.5px solid #8c8c8c;border-right:1.5px solid #8c8c8c;box-sizing:border-box;z-index:3;"></div>
<div style="position:absolute;left:617.5px;top:1386px;width:154px;height:3.8px;background:#217346;z-index:3;"></div>
<div class="t" style="left:641.00px;top:1355.32px;font-size:23.6px;line-height:23.6px;color:#217346;font-weight:bold;font-style:normal;">Summary</div>
<div class="t" style="left:794.00px;top:1355.83px;font-size:23.0px;line-height:23.0px;color:#6a6a6a;font-weight:normal;font-style:normal;">Concert Event</div>
<div class="t" style="left:995.50px;top:1355.83px;font-size:23.0px;line-height:23.0px;color:#6a6a6a;font-weight:normal;font-style:normal;">Family Event</div>
<div class="t" style="left:1183.00px;top:1355.83px;font-size:23.0px;line-height:23.0px;color:#6a6a6a;font-weight:normal;font-style:normal;">Other Event</div>
<div class="t" style="left:1361.60px;top:1355.83px;font-size:23.0px;line-height:23.0px;color:#6a6a6a;font-weight:normal;font-style:normal;">Sporting Event</div>
<div style="position:absolute;left:971.75px;top:1352.5px;width:1.5px;height:35.5px;background:#9a9a9a;z-index:3;"></div>
<div style="position:absolute;left:1158.75px;top:1352.5px;width:1.5px;height:35.5px;background:#9a9a9a;z-index:3;"></div>
<div style="position:absolute;left:1337.75px;top:1352.5px;width:1.5px;height:35.5px;background:#9a9a9a;z-index:3;"></div>
<div style="position:absolute;left:1550.25px;top:1352.5px;width:1.5px;height:35.5px;background:#9a9a9a;z-index:3;"></div>
<div style="position:absolute;left:1661px;top:1346px;width:1.2px;height:51px;background:#f0f0f0;z-index:3;"></div>
<div style="position:absolute;left:1688px;top:1357.5px;width:764px;height:26.5px;background:#d9d9d9;z-index:3;"></div>
<div style="position:absolute;left:1663.5px;top:1358px;width:25px;height:26px;background:#fff;border:1.5px solid #a2a2a2;border-radius:3px;box-sizing:border-box;z-index:3;"></div>
<div style="position:absolute;left:1688px;top:1358px;width:366.5px;height:26px;background:#fff;border:1.5px solid #b2b2b2;border-radius:2px;box-sizing:border-box;z-index:3;"></div>
<div style="position:absolute;left:2452px;top:1358px;width:26px;height:26px;background:#fff;border:1.5px solid #a2a2a2;border-radius:3px;box-sizing:border-box;z-index:3;"></div>

<svg id="ov" width="2560" height="1440" viewBox="0 0 2560 1440"><path d="M137.5,37.5 L190.5,13 L175,42.5 Q160,35 137.5,37.5 Z" fill="#1d6fbf"/><path d="M191.5,13 L216.5,42.8 Q196,36 177.8,42.8 Z" fill="#9ccb3b"/><g transform="translate(0,0) scale(1,1)" fill="none" stroke="#ffffff" stroke-width="4.2"><path d="M96.3,57.8 Q93.5,55.6 89.8,55.6 Q84.6,55.6 84.6,60.6 Q84.6,64.6 90.2,66.4 Q96.2,68.4 96.2,74 Q96.2,79.6 89.6,79.6 Q85.4,79.6 82.6,76.8"/><circle cx="118" cy="67.6" r="11.9"/><path d="M140.2,46.8 L140.2,82"/><path d="M149.6,53.6 L160.2,79 L170.8,53.6" stroke-linejoin="miter" stroke-miterlimit="2"/><path d="M178.9,67.4 L201.6,67.4 A11.4,11.4 0 1 0 198.6,75.6"/><path d="M211.7,54 L211.7,82 M211.7,64 Q213,56.8 223.3,56.8"/></g><path d="M33,146 L55,124 L77,146" fill="none" stroke="#4a8ad0" stroke-width="4.2" stroke-linejoin="miter"/><path d="M38.5,166.5 L38.5,141 L55,128.5 L71.5,141 L71.5,166.5 L65,166.5 L65,150 L55,150 L55,166.5 Z" fill="#ffffff"/><rect x="42.3" y="150" width="9.6" height="6" fill="#2f3742"/><rect x="32" y="223" width="12.8" height="39.5" rx="1" fill="#ffffff"/><rect x="34.3" y="226" width="8.2" height="17" fill="#2f3742"/><rect x="35.2" y="228.3" width="6.4" height="2.6" rx="1" fill="#4a8ad0"/><circle cx="38.4" cy="254.5" r="3" fill="#2f3742"/><rect x="45.5" y="223" width="12.8" height="39.5" rx="1" fill="#ffffff"/><rect x="47.8" y="226" width="8.2" height="17" fill="#2f3742"/><rect x="48.7" y="228.3" width="6.4" height="2.6" rx="1" fill="#4a8ad0"/><circle cx="51.9" cy="254.5" r="3" fill="#2f3742"/><g transform="translate(59.5,223.5) rotate(-14)"><rect x="0" y="0" width="12.5" height="39.5" rx="1" fill="#ffffff"/><rect x="2.3" y="3" width="8" height="17" fill="#2f3742"/><rect x="3" y="5.3" width="6.4" height="2.6" rx="1" fill="#4a8ad0"/><circle cx="6.2" cy="31.5" r="3" fill="#2f3742"/></g><path d="M43.5,323 L40.5,323 Q40.2,323 40.2,325 L40.2,357.5 Q40.2,359.5 42.5,359.5 L68,359.5 Q70,359.5 70,357.5 L70,325 Q70,323 68,323 L66,323" fill="none" stroke="#ffffff" stroke-width="3.2"/><path d="M45,326.5 Q42.5,319 49,317.5 Q51,313.3 55,313.3 Q59,313.3 61,317.5 Q67.5,319 65,326.5 Z" fill="#ffffff"/><rect x="48.5" y="320.5" width="13" height="3.5" fill="#9aa0a8"/><circle cx="55" cy="316.8" r="1.3" fill="#2f3742"/><path d="M48.5,336 L53.3,340.5 L62.8,330.5 M48.5,349 L53.3,353.5 L62.8,343.3" fill="none" stroke="#4a8ad0" stroke-width="3.8"/><rect x="36.3" y="413" width="36.8" height="43.3" fill="none" stroke="#ffffff" stroke-width="3"/><rect x="42" y="418.5" width="26" height="5" fill="#ffffff"/><path d="M47,431 L47,450 L63.5,440.5 Z" fill="#4a8ad0"/><rect x="38.7" y="508.7" width="32.5" height="46.3" rx="2.5" fill="#ffffff"/><rect x="42.2" y="513.5" width="25.5" height="6.5" rx="1" fill="#4a8ad0"/><circle cx="46.3" cy="530" r="2.6" fill="#2f3742"/><circle cx="55" cy="530" r="2.6" fill="#2f3742"/><circle cx="63.7" cy="530" r="2.6" fill="#2f3742"/><circle cx="46.3" cy="538" r="2.6" fill="#2f3742"/><circle cx="55" cy="538" r="2.6" fill="#2f3742"/><circle cx="63.7" cy="538" r="2.6" fill="#2f3742"/><circle cx="46.3" cy="546.3" r="2.6" fill="#2f3742"/><circle cx="55" cy="546.3" r="2.6" fill="#2f3742"/><circle cx="63.7" cy="546.3" r="2.6" fill="#2f3742"/><path d="M41.3,616.3 A18,18 0 0 1 69.2,616.3" fill="none" stroke="#4a8ad0" stroke-width="3"/><path d="M69.4,641.5 A18,18 0 0 1 40.8,641.5" fill="none" stroke="#4a8ad0" stroke-width="3"/><path d="M33.6,619.2 L43.5,619.2 L49.2,625 L49.2,639 L33.6,639 Z" fill="#2f3742" stroke="#ffffff" stroke-width="3"/><path d="M42.5,619.5 L42.5,626 L49,626" fill="none" stroke="#ffffff" stroke-width="2.2"/><circle cx="69.7" cy="623.8" r="6.3" fill="#ffffff"/><path d="M61.2,640.5 Q60.5,631 69.7,631 Q78.8,631 78.2,640.5 Z" fill="#ffffff"/><rect x="48.8" y="704.6" width="12.8" height="10.2" rx="2.5" fill="none" stroke="#ffffff" stroke-width="3"/><rect x="48.8" y="721.2" width="12.8" height="10.2" rx="2.5" fill="none" stroke="#ffffff" stroke-width="3"/><rect x="48.8" y="737.7" width="12.8" height="10.2" rx="2.5" fill="none" stroke="#ffffff" stroke-width="3"/><path d="M43.5,714 Q35,714 35.5,718.5 Q36.5,721.5 42,721.5" fill="none" stroke="#4a8ad0" stroke-width="2.4"/><path d="M40,718.5 L44.5,721.5 L40.5,724.5 Z" fill="#4a8ad0"/><path d="M66,730.5 Q75,730 74.5,734.5 Q74,738 67.5,738" fill="none" stroke="#4a8ad0" stroke-width="2.4"/><path d="M69.5,735 L65,738 L69,741 Z" fill="#4a8ad0"/><path d="M37.5,839 L51,828" stroke="#4a8ad0" stroke-width="7.5" stroke-linecap="round"/><path d="M58,808.5 L63,805.5 Q70,805 74,810 L80,816.5 L73.5,823.5 L68,818 L62,822.5 L57,817 L61,813 Z" fill="#ffffff"/><path d="M45,818 L66.5,837.5" stroke="#ffffff" stroke-width="8" stroke-linecap="round"/><circle cx="66.3" cy="837.5" r="7.3" fill="#ffffff"/><circle cx="66.3" cy="837.5" r="3" fill="#2f3742"/><path d="M31,814 Q33,826 45,826 Q55,825 55.5,814 Q55,804 43,802 L42.5,803 Q48,807 46.5,812 Q44,816.5 38.5,814.5 Q35,813 32,810.5 Z" fill="#ffffff"/><path d="M60.98,936.96 L58.68,937.62 L58.08,943.40 L52.12,943.40 L51.52,937.62 L49.22,936.96 L47.03,935.99 L42.85,940.03 L38.29,936.20 L41.55,931.39 L40.20,929.40 L39.15,927.24 L33.36,927.66 L32.32,921.79 L37.91,920.20 L38.16,917.81 L38.74,915.48 L34.04,912.07 L37.01,906.92 L42.32,909.29 L44.04,907.62 L45.99,906.21 L44.57,900.58 L50.17,898.54 L52.71,903.77 L55.10,903.60 L57.49,903.77 L60.03,898.54 L65.63,900.58 L64.21,906.21 L66.16,907.62 L67.88,909.29 L73.19,906.92 L76.16,912.07 L71.46,915.48 L72.04,917.81 L72.29,920.20 L77.88,921.79 L76.84,927.66 L71.05,927.24 L70.00,929.40 L68.65,931.39 L71.91,936.20 L67.35,940.03 L63.17,935.99 Z" fill="#ffffff" stroke="#ffffff" stroke-width="1.2" stroke-linejoin="round"/><circle cx="55.1" cy="920.8" r="9" fill="#2f3742"/><path d="M348.2,27.5 H362.6 M348.2,34.3 H362.6 M348.2,41.1 H362.6" stroke="#222" stroke-width="2.7" stroke-linecap="round"/><path d="M621.5,33.5 L632.5,40.2 L621.5,47" fill="none" stroke="#2b7bd6" stroke-width="2.2"/><path d="M1751.2,20.5 a1.8,1.8 0 0 1 0,3.6 a1.8,1.8 0 0 1 0,-3.6 Z M1751.2,23.5 Q1743,24.5 1743.3,33 L1743,39.5 Q1742.5,42.5 1740,44 L1740,45.2 L1762.5,45.2 L1762.5,44 Q1760,42.5 1759.5,39.5 L1759.2,33 Q1759.5,24.5 1751.2,23.5 Z M1748,46 Q1748.5,48.5 1751.2,48.5 Q1754,48.5 1754.5,46 Z" fill="#111"/><path d="M1746.5,29.5 Q1745.5,33 1746,38.5 Q1745.8,41 1744.5,42.5" fill="none" stroke="#fff" stroke-width="1"/><path d="M1911.5,37 L1918,43.5 L1924.5,37" fill="none" stroke="#c4c4c4" stroke-width="2.2"/><circle cx="1979.5" cy="33.5" r="12.3" fill="none" stroke="#111" stroke-width="2.4"/><circle cx="1974.8" cy="30" r="1.9" fill="#111"/><circle cx="1984.2" cy="30" r="1.9" fill="#111"/><path d="M1972.5,36.5 Q1979.5,43.5 1986.5,36.5" fill="none" stroke="#111" stroke-width="2.4"/><circle cx="2152.2" cy="33.6" r="12.6" fill="none" stroke="#111" stroke-width="2.5"/><path d="M2147.5,30 Q2147.5,25.3 2152.2,25.3 Q2157,25.3 2157,29.5 Q2157,32 2154.3,33.5 Q2152.3,34.6 2152.3,37" fill="none" stroke="#111" stroke-width="3"/><circle cx="2152.3" cy="41.3" r="1.9" fill="#111"/><circle cx="2311.2" cy="27.3" r="6.6" fill="#111"/><path d="M2301.3,47.3 L2301.3,43 Q2301.3,35.5 2309,35 L2313.5,35 Q2321.1,35.5 2321.1,43 L2321.1,47.3 Z" fill="#111"/><path d="M2533.5,34.5 L2540.5,41.5 L2547.5,34.5" fill="none" stroke="#c4c4c4" stroke-width="2.4"/><path d="M354,123.5 L359.8,130 L354,136.5 M360.8,123.5 L366.6,130 L360.8,136.5" fill="none" stroke="#3a3a3a" stroke-width="2"/><path d="M343.5,381 Q343,377.5 357.5,377.5 Q372,377.5 371.5,381 L361,392.5 L361,404 Q361,405.5 359.5,405.5 L355.5,405.5 Q354,405.5 354,404 L354,392.5 Z" fill="#3a3a3a"/><ellipse cx="357.5" cy="380.3" rx="11" ry="1.6" fill="#eee"/><rect x="446" y="109.7" width="16" height="25.3" rx="1" fill="#111"/><rect x="455" y="122.5" width="16" height="12.5" rx="1" fill="#111"/><rect x="447.59999999999997" y="111.8" width="2.2" height="3" fill="#bdbdbd"/><rect x="451.29999999999995" y="111.8" width="2.2" height="3" fill="#bdbdbd"/><rect x="454.59999999999997" y="111.8" width="2.2" height="3" fill="#bdbdbd"/><rect x="458.29999999999995" y="111.8" width="2.2" height="3" fill="#bdbdbd"/><rect x="447.59999999999997" y="117.2" width="2.2" height="3" fill="#bdbdbd"/><rect x="451.29999999999995" y="117.2" width="2.2" height="3" fill="#bdbdbd"/><rect x="454.59999999999997" y="117.2" width="2.2" height="3" fill="#bdbdbd"/><rect x="458.29999999999995" y="117.2" width="2.2" height="3" fill="#bdbdbd"/><rect x="447.59999999999997" y="122.5" width="2.2" height="3" fill="#bdbdbd"/><rect x="451.29999999999995" y="122.5" width="2.2" height="3" fill="#bdbdbd"/><rect x="447.59999999999997" y="127.9" width="2.2" height="3" fill="#bdbdbd"/><rect x="451.29999999999995" y="127.9" width="2.2" height="3" fill="#bdbdbd"/><rect x="456.5" y="124.5" width="2.2" height="3" fill="#bdbdbd"/><rect x="460.2" y="124.5" width="2.2" height="3" fill="#bdbdbd"/><rect x="463.5" y="124.5" width="2.2" height="3" fill="#bdbdbd"/><rect x="467.09999999999997" y="124.5" width="2.2" height="3" fill="#bdbdbd"/><rect x="456.5" y="130.0" width="2.2" height="3" fill="#bdbdbd"/><rect x="467.09999999999997" y="130.0" width="2.2" height="3" fill="#bdbdbd"/><rect x="460.8" y="129" width="4.6" height="6" fill="#4a8ad0"/><path d="M673,121 L679.5,127.5 L686,121" fill="none" stroke="#111" stroke-width="2.8"/><path d="M1958.5,93.9 L1969.5,93.9 L1975.2,99.8 L1975.2,118.8 L1954,118.8 L1954,99.5" fill="none" stroke="#111" stroke-width="2.3"/><path d="M1969.2,94 L1969.2,100.2 L1975.2,100.2" fill="none" stroke="#111" stroke-width="1.8"/><path d="M1955.5,97 L1959.8,101" stroke="#333" stroke-width="1.6"/><circle cx="1954.2" cy="95.6" r="3.6" fill="#2a2a2a"/><circle cx="1953.2" cy="94.6" r="1.2" fill="#999"/><path d="M2037.3,114 L2054.6,96.7" stroke="#111" stroke-width="7.6" stroke-linecap="round"/><path d="M2040,110.8 L2050.5,100.3" stroke="#fff" stroke-width="1.5"/><path d="M2050.8,96.5 L2055,100.8" stroke="#fff" stroke-width="1.1"/><path d="M2032.4,118.8 L2034.5,110.5 L2040.7,116.7 Z" fill="#111"/><path d="M2034.3,116.9 L2035.3,112.7 L2038.5,115.9 Z" fill="#bbb"/><rect x="2111.5" y="96.7" width="19.9" height="3.8" rx="1.8" fill="#111"/><rect x="2117.5" y="95" width="8.5" height="2.5" rx="1" fill="#111"/><path d="M2113,101.5 L2130,101.5 L2130,117.5 Q2130,120 2127.5,120 L2115.5,120 Q2113,120 2113,117.5 Z" fill="#111"/><rect x="2115.8" y="102.5" width="2.8" height="15.5" fill="#9a9a9a"/><rect x="2120.3" y="102.5" width="2.8" height="15.5" fill="#fff"/><rect x="2124.8" y="102.5" width="2.8" height="15.5" fill="#9a9a9a"/><rect x="2246.5" y="93.8" width="22" height="25.3" fill="none" stroke="#111" stroke-width="1.8"/><rect x="2249.5" y="97.5" width="16" height="2.6" fill="#111"/><path d="M2251.5,106.5 L2258.5,114 M2258.5,106.5 L2251.5,114" stroke="#111" stroke-width="2.6"/><rect x="2260.5" y="108.5" width="4.5" height="5" fill="#aaa"/><path d="M2252.5,163.5 L2257.6,168.5 L2262.7,163.5" fill="none" stroke="#111" stroke-width="2.6"/><path d="M2387.7,107.3 A11.3,11.3 0 1 1 2392,115.2" fill="none" stroke="#111" stroke-width="2.7"/><path d="M2383,105.8 L2393,105.8 L2388,113 Z" fill="#111"/><path d="M2395.7,100.3 L2399,106.5 L2403.6,104.5" fill="none" stroke="#111" stroke-width="2"/><path d="M2479,96 L2497.4,117.5 M2497.4,96 L2479,117.5" stroke="#111" stroke-width="6.4" stroke-linecap="butt"/><path d="M693.5,252.5 L698.8,257.8 L704,252.5" fill="none" stroke="#111" stroke-width="2.4"/><circle cx="2274.3" cy="315.7" r="18.2" fill="#4285c8"/><rect x="2452" y="305.5" width="21.5" height="22" fill="none" stroke="#cfcfcf" stroke-width="1.6"/><rect x="2452" y="322" width="5.5" height="5.5" fill="none" stroke="#cfcfcf" stroke-width="1.4"/><path d="M2471,308 L2461,318 M2461,311 L2461,318 L2468,318" fill="none" stroke="#c8c8c8" stroke-width="2.2"/><rect x="2489" y="303.5" width="3.2" height="25.5" fill="#c8c8c8"/><rect x="2494" y="303.5" width="20.5" height="4" fill="#c8c8c8"/><path d="M2494.5,309.5 H2514 V328.5 H2494.5 Z M2494.5,316 H2514 M2494.5,322.3 H2514 M2501,309.5 V328.5 M2507.5,309.5 V328.5" fill="none" stroke="#c8c8c8" stroke-width="1.6"/><path d="M2493.5,362 L2505.5,362 L2499.5,355 Z" fill="#777"/><path d="M2493.5,1328.5 L2505.5,1328.5 L2499.5,1335.5 Z" fill="#777"/><path d="M494.5,1365.5 L494.5,1377.5 L487,1371.5 Z" fill="#c4c4c4"/><path d="M538,1365.5 L538,1377.5 L545.5,1371.5 Z" fill="#c4c4c4"/><circle cx="1636" cy="1364.5" r="1.3" fill="#999"/><circle cx="1636" cy="1372" r="1.3" fill="#999"/><circle cx="1636" cy="1379.5" r="1.3" fill="#999"/><path d="M1679.5,1365.5 L1679.5,1377 L1672.5,1371.2 Z" fill="#777"/><path d="M2462,1365.5 L2462,1377 L2469,1371.2 Z" fill="#777"/></svg>
</div></div></div></body></html>
